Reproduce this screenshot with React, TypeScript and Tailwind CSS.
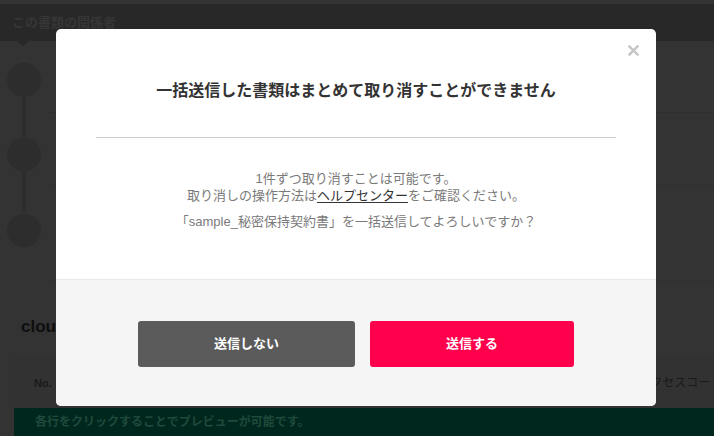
import React from 'react'

const font = "font-['Liberation_Sans','Noto_Sans_CJK_JP',sans-serif]"

function Sidebar() {
  return (
    <div className="flex w-[48px] flex-col items-center pt-[22px]">
      <div className="h-[34px] w-[34px] rounded-full bg-[#2d2d2d]" />
      <div className="h-[41px] w-[4px] bg-[#2d2d2d]" />
      <div className="h-[33px] w-[34px] rounded-full bg-[#2d2d2d]" />
      <div className="h-[43px] w-[4px] bg-[#2d2d2d]" />
      <div className="h-[33px] w-[34px] rounded-full bg-[#2d2d2d]" />
    </div>
  )
}

function CloseIcon() {
  return (
    <svg width="11" height="11" viewBox="0 0 11 11">
      <path d="M1.5 1.5 L9.5 9.5 M9.5 1.5 L1.5 9.5" stroke="#c4c4c4" strokeWidth="2.4" strokeLinecap="square" />
    </svg>
  )
}

function ConfirmModal() {
  return (
    <div className="absolute left-[56px] top-[29px] flex w-[600px] flex-col overflow-hidden rounded-[5px] bg-white">
      <button className="absolute right-[17px] top-[16px] flex h-[11px] w-[11px] items-center justify-center">
        <CloseIcon />
      </button>

      <div className="px-[40px] pt-[51px]">
        <h2 className="text-center text-[16px] font-bold leading-[22px] text-[#333]">
          一括送信した書類はまとめて取り消すことができません
        </h2>
        <div className="mt-[35px] h-px bg-[#cccccc]" />
      </div>

      <div className="flex h-[141px] flex-col items-center pt-[32px] text-[13px] leading-[17px] text-[#7a7a7a]">
        <p>1件ずつ取り消すことは可能です。</p>
        <p>
          取り消しの操作方法は
          <a className="text-[#333] underline underline-offset-[2px]">ヘルプセンター</a>
          をご確認ください。
        </p>
        <p className="mt-[9px]">「sample_秘密保持契約書」を一括送信してよろしいですか？</p>
      </div>

      <div className="flex h-[127px] justify-center gap-[15px] border-t border-[#e8e8e8] bg-[#f5f5f5] pt-[41px]">
        <button className="h-[46px] w-[217px] rounded-[3px] bg-[#5b5b5b] text-[13px] font-bold text-white">
          送信しない
        </button>
        <button className="h-[46px] w-[204px] rounded-[3px] bg-[#ff004c] text-[13px] font-bold text-white">
          送信する
        </button>
      </div>
    </div>
  )
}

export default function App() {
  return (
    <div className={`relative h-[436px] w-[714px] overflow-hidden bg-[#333333] ${font}`}>
      <div className="h-[4px] bg-[#333333]" />

      {/* header band */}
      <div className="relative flex h-[37px] items-center bg-[#282828]">
        <div className="ml-[12px] text-[13px] font-bold text-[#363636]">この書類の関係者</div>
        <div className="absolute left-[17px] top-[37px] h-0 w-0 border-x-[6px] border-t-[5px] border-x-transparent border-t-[#282828]" />
      </div>

      {/* body */}
      <div className="flex h-[240px]">
        <Sidebar />
        <div className="flex flex-1 flex-col">
          <div className="h-[74px] border-b border-[#2f2f2f]" />
          <div className="h-[75px] border-b border-[#2f2f2f]" />
          <div className="h-[97px] border-b border-[#303030]" />
        </div>
      </div>

      <div className="flex h-[75px] items-start pl-[21px] pt-[36px]">
        <span className="text-[17px] font-bold leading-[20px] text-[#0e0e0e]">cloud</span>
      </div>

      <div className="ml-[14px] flex h-[80px] flex-col bg-[#323232]">
        <div className="flex h-[52px] items-start overflow-hidden whitespace-nowrap pl-[20px] pt-[20px]">
          <span className="text-[11px] font-bold leading-[14px] text-[#1a1a1a]">No.</span>
          <span className="ml-[587px] text-[12px] leading-[14px] text-[#1a1a1a]">アクセスコード</span>
        </div>
        <div className="flex h-[28px] flex-1 items-center bg-[#00271d] pl-[21px]">
          <span className="text-[12px] font-bold text-[#1f4a3c]">各行をクリックすることでプレビューが可能です。</span>
        </div>
      </div>

      <ConfirmModal />
    </div>
  )
}
